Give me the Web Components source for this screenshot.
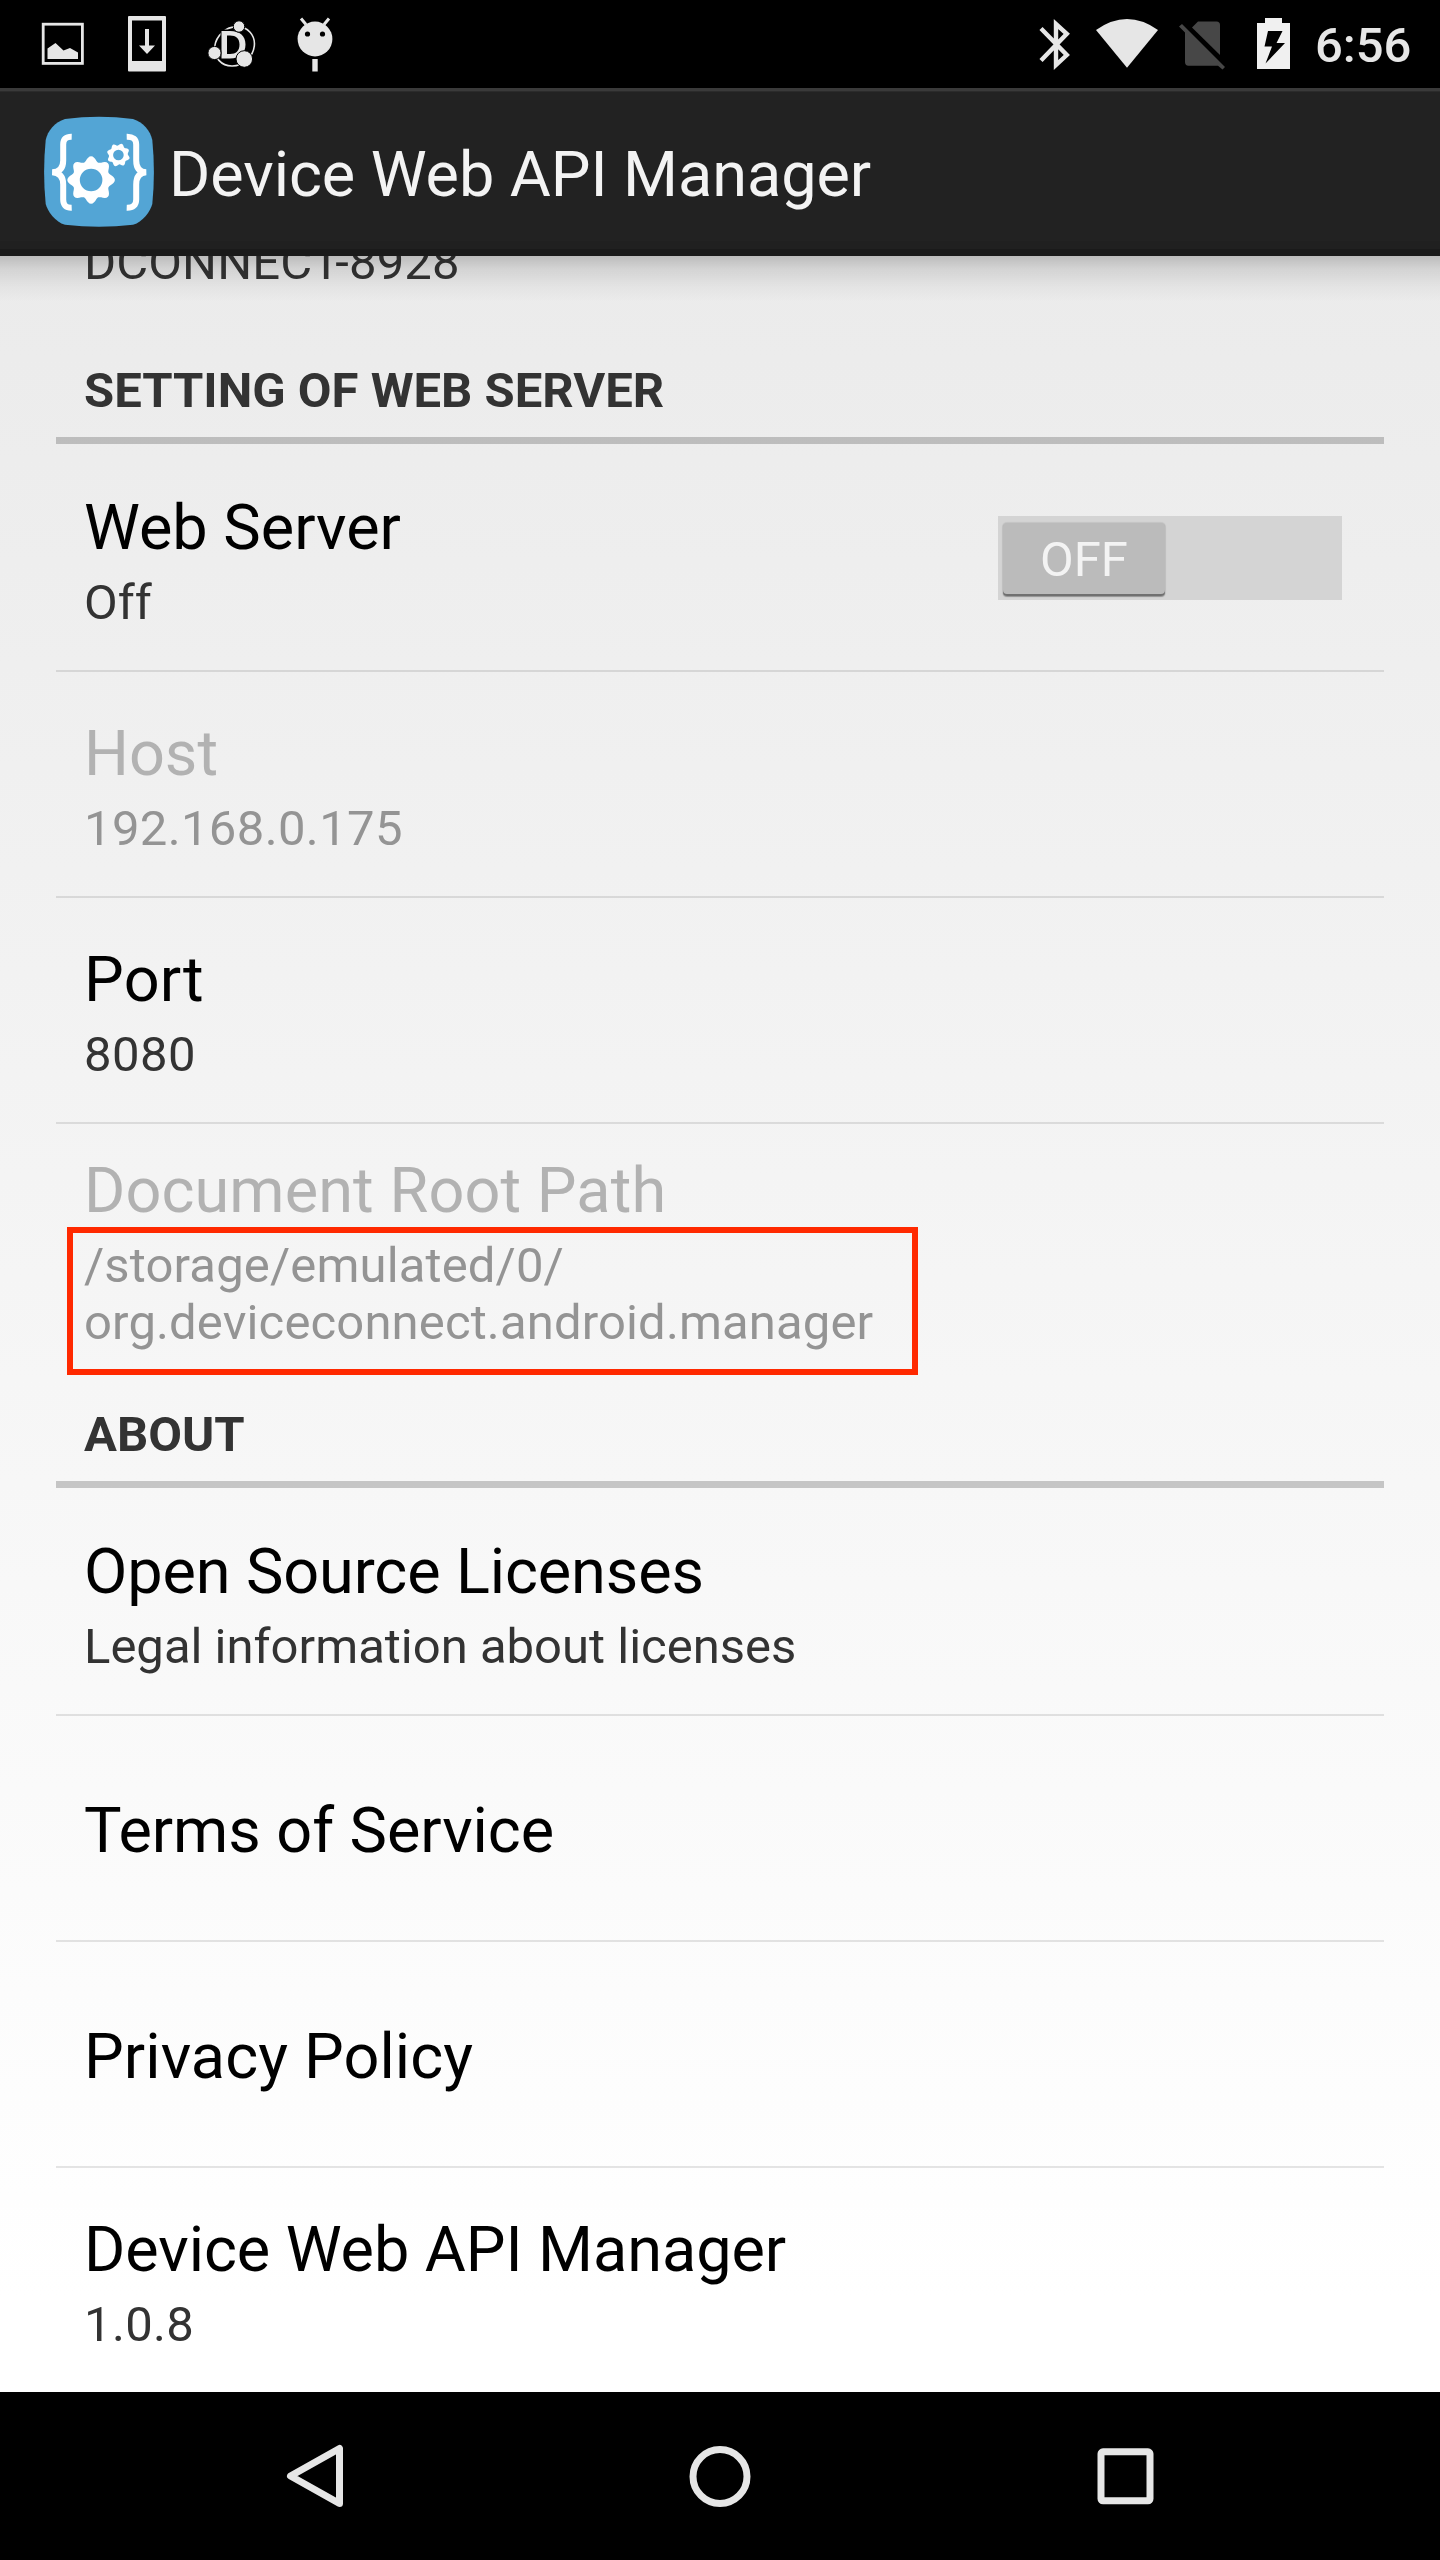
<!DOCTYPE html>
<html lang="en"><head><meta charset="utf-8"><title>Device Web API Manager</title>
<style>
html,body{margin:0;padding:0}
body{width:1440px;height:2560px;overflow:hidden;font-family:Roboto,sans-serif;background:#000}
</style></head><body>
<settings-screen></settings-screen>
<script>
const define=(name,html)=>{
  const t=document.createElement('template');t.innerHTML=html;
  customElements.define(name,class extends HTMLElement{
    constructor(){super();this.attachShadow({mode:'open'}).append(t.content.cloneNode(true));}
  });
};

define('status-bar',`<style>
:host{display:flex;height:88px;background:#000;color:#e6e6e6;justify-content:space-between}
svg{display:block;fill:#e6e6e6}
.r{display:flex}
.clock{font-size:49px;font-weight:500;line-height:88px;width:125px;height:88px;padding-top:2px;box-sizing:border-box;white-space:nowrap}
</style>
<svg width="360" height="88" viewBox="0 0 360 88">
 <rect x="43.2" y="24.2" width="39.2" height="39.2" fill="none" stroke="#e6e6e6" stroke-width="2.8"/>
 <path d="M47.5 48.5L55.5 43L63.5 50.5L70 48L78 52.5V59H47.5Z"/>
 <path fill-rule="evenodd" d="M129 16H165Q166 16 166 17V70.500Q166 71.500 165 71.500H129Q128 71.500 128 70.500V17Q128 16 129 16ZM132 20.500V61H162V20.500Z"/>
 <path d="M145 29H149V45.500H155L147 54L139 45.500H145Z"/>
 <ellipse cx="234.500" cy="46.300" rx="21" ry="18.500" transform="rotate(-42 234.500 46.300)" fill="none" stroke="#e6e6e6" stroke-width="1.600"/>
 <path d="M220.500 29.500V56H238V29.500Z" fill="#000"/>
 <path fill-rule="evenodd" d="M221.500 31H230C240 31 245.500 36 245.500 44.500C245.500 53 240 58.500 230 58.500H221.500ZM227 35.500V54H230C236 54 239.500 51 239.500 44.500C239.500 38.500 236 35.500 230 35.500Z"/>
 <circle cx="239" cy="26.500" r="5.700" stroke="#000" stroke-width="1"/>
 <circle cx="214.500" cy="53" r="6.600" stroke="#000" stroke-width="1"/>
 <circle cx="244.300" cy="59" r="8.300" stroke="#000" stroke-width="1"/>
 <circle cx="315" cy="39" r="17.400"/>
 <path d="M301 18.500L306 24.500M329 18.500L324 24.500" stroke="#e6e6e6" stroke-width="3"/>
 <circle cx="307.500" cy="34" r="2.600" fill="#000"/><circle cx="322.500" cy="34" r="2.600" fill="#000"/>
 <path d="M312.300 59H317.700V71.500H312.300Z"/>
</svg>
<div class="r">
<svg width="316" height="88" viewBox="999 0 316 88">
 <path d="M1041 28.500L1066.800 55L1056 65V24L1066.800 33.800L1041 60.500" fill="none" stroke="#e6e6e6" stroke-width="4.400"/>
 <path d="M1096 30Q1127 8 1158 30L1127 67.800Z"/>
 <g fill="#474747"><path d="M1198 21.500H1216.500Q1220 21.500 1220 25V55L1192 27.500Z"/>
 <path d="M1182 24L1225 67L1222.500 69.500L1218 65.700H1188.500Q1185 65.700 1185 62V32.500L1179 26.500Z"/></g>
 <path fill-rule="evenodd" fill="#f0f0f0" d="M1265 18H1282V23H1290V69H1257V23H1265ZM1268 31L1264.500 46.500H1272L1265.500 63.500L1285 43H1276.500L1282.500 31Z"/>
</svg>
<div class="clock">6:56</div></div>`);

define('app-icon',`<style>:host{display:block;width:112px;height:112px}svg{display:block}</style>
<svg width="112" height="112" viewBox="0 0 112 112">
 <path fill="#53a5d5" d="M22 3Q56-1.500 90 3C100 6 107.500 15 109.300 24Q112.500 56 109.300 88C107.500 95 100 106 90 108.800Q56 112.800 22 108.800C12 106 4.500 95 2.700 88Q-.500 56 2.700 24C4.500 15 12 6 22 3Z"/>
 <g transform="translate(.7 .5)" fill="none" stroke="#fff" stroke-width="6"><path d="M28 20.200Q19.500 20 19.500 28V44Q19.500 55.500 8.500 55.800Q19.500 56.500 19.500 68V83Q19.500 91.500 28 91.200"/>
 <path d="M83 20.200Q92.500 20 92.500 28V44Q92.500 55.500 102.500 55.800Q92.500 56.500 92.500 68V83Q92.500 91.500 83 91.200"/></g>
 <g id="g"></g>
</svg>`);

define('action-bar',`<style>
:host{display:flex;box-sizing:border-box;height:168px;padding:28px 0 0 43px;gap:14px;background:linear-gradient(#3a3a3a 0 3px,#2b2b2b 3px 4px,#222 4px 153px,#202020 153px 161px,#1a1a1a 161px);color:#f3f3f3;position:relative;z-index:1}
:host::after{content:"";position:absolute;left:0;right:0;top:168px;height:46px;background:linear-gradient(rgba(0,0,0,.2),rgba(0,0,0,.1) 28%,rgba(0,0,0,.035) 65%,transparent)}
.t{font-size:63px;line-height:74px;padding-top:22px;white-space:nowrap;letter-spacing:-.07px}
</style><app-icon></app-icon><div class="t"><slot></slot></div>`);

define('pref-category',`<style>
:host{display:flex;flex-direction:column;justify-content:flex-end;box-sizing:border-box;height:var(--h,98px);margin:0 56px 2px;padding-left:28px;border-bottom:7px solid rgba(0,0,0,.2);font-size:49px;font-weight:700;line-height:57px;color:#333}
div{margin-bottom:18px;white-space:nowrap}
</style><div><slot></slot></div>`);

define('pref-row',`<style>
:host{display:flex;box-sizing:border-box;height:226px;margin:0 56px;padding:45px 42px 0 28px;border-bottom:2px solid rgba(0,0,0,.1);justify-content:space-between}
:host([single]){padding-top:78px}
:host([last]){height:224px;border:0}
.t{font-size:63px;line-height:74px;color:#000;white-space:nowrap;letter-spacing:var(--tls,0)}
.s{font-size:49px;line-height:57px;color:#333;margin-top:9px;white-space:nowrap;letter-spacing:var(--sls,0)}
:host([disabled]) .t{color:#b2b2b2}
:host([disabled]) .s{color:#949494}
</style><div><div class="t"><slot></slot></div><div class="s"><slot name="summary"></slot></div></div><slot name="widget"></slot>`);

define('toggle-switch',`<style>
:host{display:flex;box-sizing:border-box;width:344px;height:84px;margin-top:25px;padding:7px 5px 0;background:#d4d4d4}
.k{width:162px;height:73px;box-sizing:border-box;border-radius:4px;background:#bbb;color:#f3f3f3;font-size:49px;line-height:74px;text-align:center;box-shadow:0 0 1px 1px rgba(0,0,0,.08),inset 0 -2px 0 #707070,0 1px 1px rgba(0,0,0,.25)}
</style><div class="k"><slot></slot></div>`);

define('callout-box',`<style>:host{position:absolute;box-sizing:border-box;border:6px solid #ff2900}</style>`);

define('nav-bar',`<style>:host{display:flex;height:168px;background:#000;align-items:center;justify-content:center;gap:333px}svg{display:block;fill:none;stroke:#e6e6e6;stroke-width:7;overflow:visible}</style>
<svg width="72" height="72"><path stroke-linejoin="round" d="M60.500 8.500V63.500L11.500 36Z"/></svg>
<svg width="72" height="72"><circle cx="36" cy="36.500" r="27"/></svg>
<svg width="72" height="72"><rect x="12" y="11.800" width="49" height="49" rx="2"/></svg>`);

define('settings-screen',`<style>
:host{display:flex;flex-direction:column;width:1440px;height:2560px;font-family:Roboto,sans-serif}
main{position:relative;display:flex;flex-direction:column;height:2136px;overflow:hidden;background:linear-gradient(#ebebeb,#fff 2044px)}
main>*{flex:none}
.peek{height:90px;padding-left:84px;font-size:49px;line-height:57px;color:#333;box-sizing:border-box;margin-top:-22px;white-space:nowrap;letter-spacing:.12px}
.doc{height:268px;padding-top:30px;border:0}
</style>
<status-bar></status-bar>
<action-bar>Device Web API Manager</action-bar>
<main>
<div class="peek">DCONNECT-8928</div>
<pref-category style="--h:120px">SETTING OF WEB SERVER</pref-category>
<pref-row>Web Server<span slot="summary">Off</span><toggle-switch slot="widget">OFF</toggle-switch></pref-row>
<pref-row disabled style="--sls:.36px">Host<span slot="summary">192.168.0.175</span></pref-row>
<pref-row style="--tls:.3px;--sls:.45px">Port<span slot="summary">8080</span></pref-row>
<pref-row class="doc" disabled style="--tls:.09px;--sls:.14px">Document Root Path<span slot="summary">/storage/emulated/0/<br>org.deviceconnect.android.manager</span></pref-row>
<pref-category style="--h:96px">ABOUT</pref-category>
<pref-row style="--tls:-.12px">Open Source Licenses<span slot="summary">Legal information about licenses</span></pref-row>
<pref-row single style="--tls:-.06px">Terms of Service</pref-row>
<pref-row single style="--tls:.1px">Privacy Policy</pref-row>
<pref-row last style="--tls:-.07px;--sls:.35px">Device Web API Manager<span slot="summary">1.0.8</span></pref-row>
<callout-box style="left:67px;top:971px;width:851px;height:148px"></callout-box>
</main>
<nav-bar></nav-bar>`);

/* Gears of the app icon: eight rounded teeth around a hole. */
document.querySelector('settings-screen').shadowRoot.querySelector('action-bar').shadowRoot.querySelectorAll('app-icon').forEach(icon=>{
  const gear=(cx,cy,R,r,hole,offset)=>{
    let d='';
    for(let i=0;i<=96;i++){
      const a=i/96*2*Math.PI,k=Math.cos(8*(a-offset)),rad=(R+r)/2+(R-r)/2*k;
      d+=(i?'L':'M')+(cx+rad*Math.cos(a)).toFixed(2)+' '+(cy+rad*Math.sin(a)).toFixed(2);
    }
    d+='ZM'+(cx-hole)+' '+cy+'a'+hole+' '+hole+' 0 1 0 '+2*hole+' 0a'+hole+' '+hole+' 0 1 0 '+-2*hole+' 0Z';
    return '<path fill="#fff" fill-rule="evenodd" d="'+d+'"/>';
  };
  icon.shadowRoot.getElementById('g').innerHTML=gear(48.1,64,23.8,18.8,11.3,0)+gear(75.4,39,11.6,9.4,5.3,.3);
});
</script></body></html>
